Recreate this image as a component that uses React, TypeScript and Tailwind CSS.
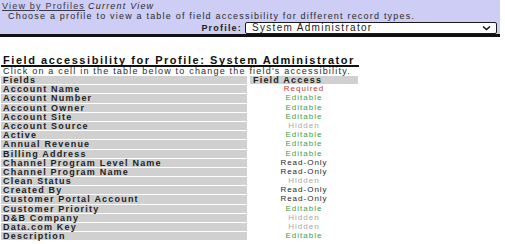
import React from "react";

type Access = "Required" | "Editable" | "Hidden" | "Read-Only";

const rows: [string, Access][] = [
  ["Account Name", "Required"],
  ["Account Number", "Editable"],
  ["Account Owner", "Editable"],
  ["Account Site", "Editable"],
  ["Account Source", "Hidden"],
  ["Active", "Editable"],
  ["Annual Revenue", "Editable"],
  ["Billing Address", "Editable"],
  ["Channel Program Level Name", "Read-Only"],
  ["Channel Program Name", "Read-Only"],
  ["Clean Status", "Hidden"],
  ["Created By", "Read-Only"],
  ["Customer Portal Account", "Read-Only"],
  ["Customer Priority", "Editable"],
  ["D&B Company", "Hidden"],
  ["Data.com Key", "Hidden"],
  ["Description", "Editable"],
];

const accessColor: Record<Access, string> = {
  Required: "text-[#c03a3a]",
  Editable: "text-[#3fa13f]",
  Hidden: "text-[#a9a9a9]",
  "Read-Only": "text-[#2a2a2a]",
};

export default function App() {
  return (
    <div className="w-[505px] h-[244px] overflow-hidden bg-white font-['Liberation_Sans',Arial,sans-serif] text-[#2b2b2b]">
      <div className="w-[500px] h-[34px] bg-[#cdcdf6] flex flex-col pl-[2px]">
        <div className="h-[11px] leading-[11px] text-[9px] tracking-[1.2px] flex gap-[3px] pt-[1px]">
          <span className="underline text-[#3a3a4a]">View by Profiles</span>
          <span className="italic">Current View</span>
        </div>
        <div className="h-[10px] leading-[10px] text-[9px] tracking-[1.2px] pl-[6px]">
          Choose a profile to view a table of field accessibility for different record types.
        </div>
        <div className="flex justify-end items-center gap-[3px] pr-[3px] h-[12px] mt-[1px]">
          <span className="text-[9px] font-bold tracking-[1.2px] leading-[12px] text-[#222]">Profile:</span>
          <div className="w-[252px] h-[12px] bg-white border border-[#1a1a1a] rounded-[2px] flex items-center justify-between pl-[6px] pr-[5px]">
            <span className="text-[10px] leading-[10px] tracking-[1.3px] text-[#222]">System Administrator</span>
            <svg width="9" height="6" viewBox="0 0 9 6">
              <polyline points="1,1.5 4.5,4.5 8,1.5" fill="none" stroke="#111" strokeWidth="1.6" />
            </svg>
          </div>
        </div>
      </div>
      <div className="w-[500px] h-[3px] bg-[#111]" />
      <div className="pl-[1px] pt-[18px]">
        <div className="w-[358px] border-b-2 border-[#111] text-[11px] leading-[10px] font-bold tracking-[1.55px] text-[#111] pl-[2px] h-[12px]">
          Field accessibility for Profile: System Administrator
        </div>
        <div className="text-[9px] leading-[9px] tracking-[1.2px] pl-[2px] h-[9px]">
          Click on a cell in the table below to change the field's accessibility.
        </div>
        <div className="flex flex-col gap-[1px] mt-[0px]">
          <div className="flex gap-[3px] h-[8.2px]">
            <div className="w-[246px] bg-[#d0d0d0] text-[9px] leading-[8.2px] font-bold tracking-[1.2px] pl-[2px] text-[#222]">
              Fields
            </div>
            <div className="w-[108px] bg-[#d0d0d0] text-[9px] leading-[8.2px] font-bold tracking-[1.2px] pl-[3px] text-[#222]">
              Field Access
            </div>
          </div>
          {rows.map(([name, access]) => (
            <div key={name} className="flex gap-[3px] h-[8.2px]">
              <div className="w-[246px] bg-[#d0d0d0] text-[9px] leading-[8.2px] font-bold tracking-[1.2px] pl-[2px] text-[#222]">
                {name}
              </div>
              <div className={`w-[108px] text-center text-[8px] leading-[8.2px] tracking-[1px] ${accessColor[access]}`}>
                {access}
              </div>
            </div>
          ))}
        </div>
      </div>
    </div>
  );
}
